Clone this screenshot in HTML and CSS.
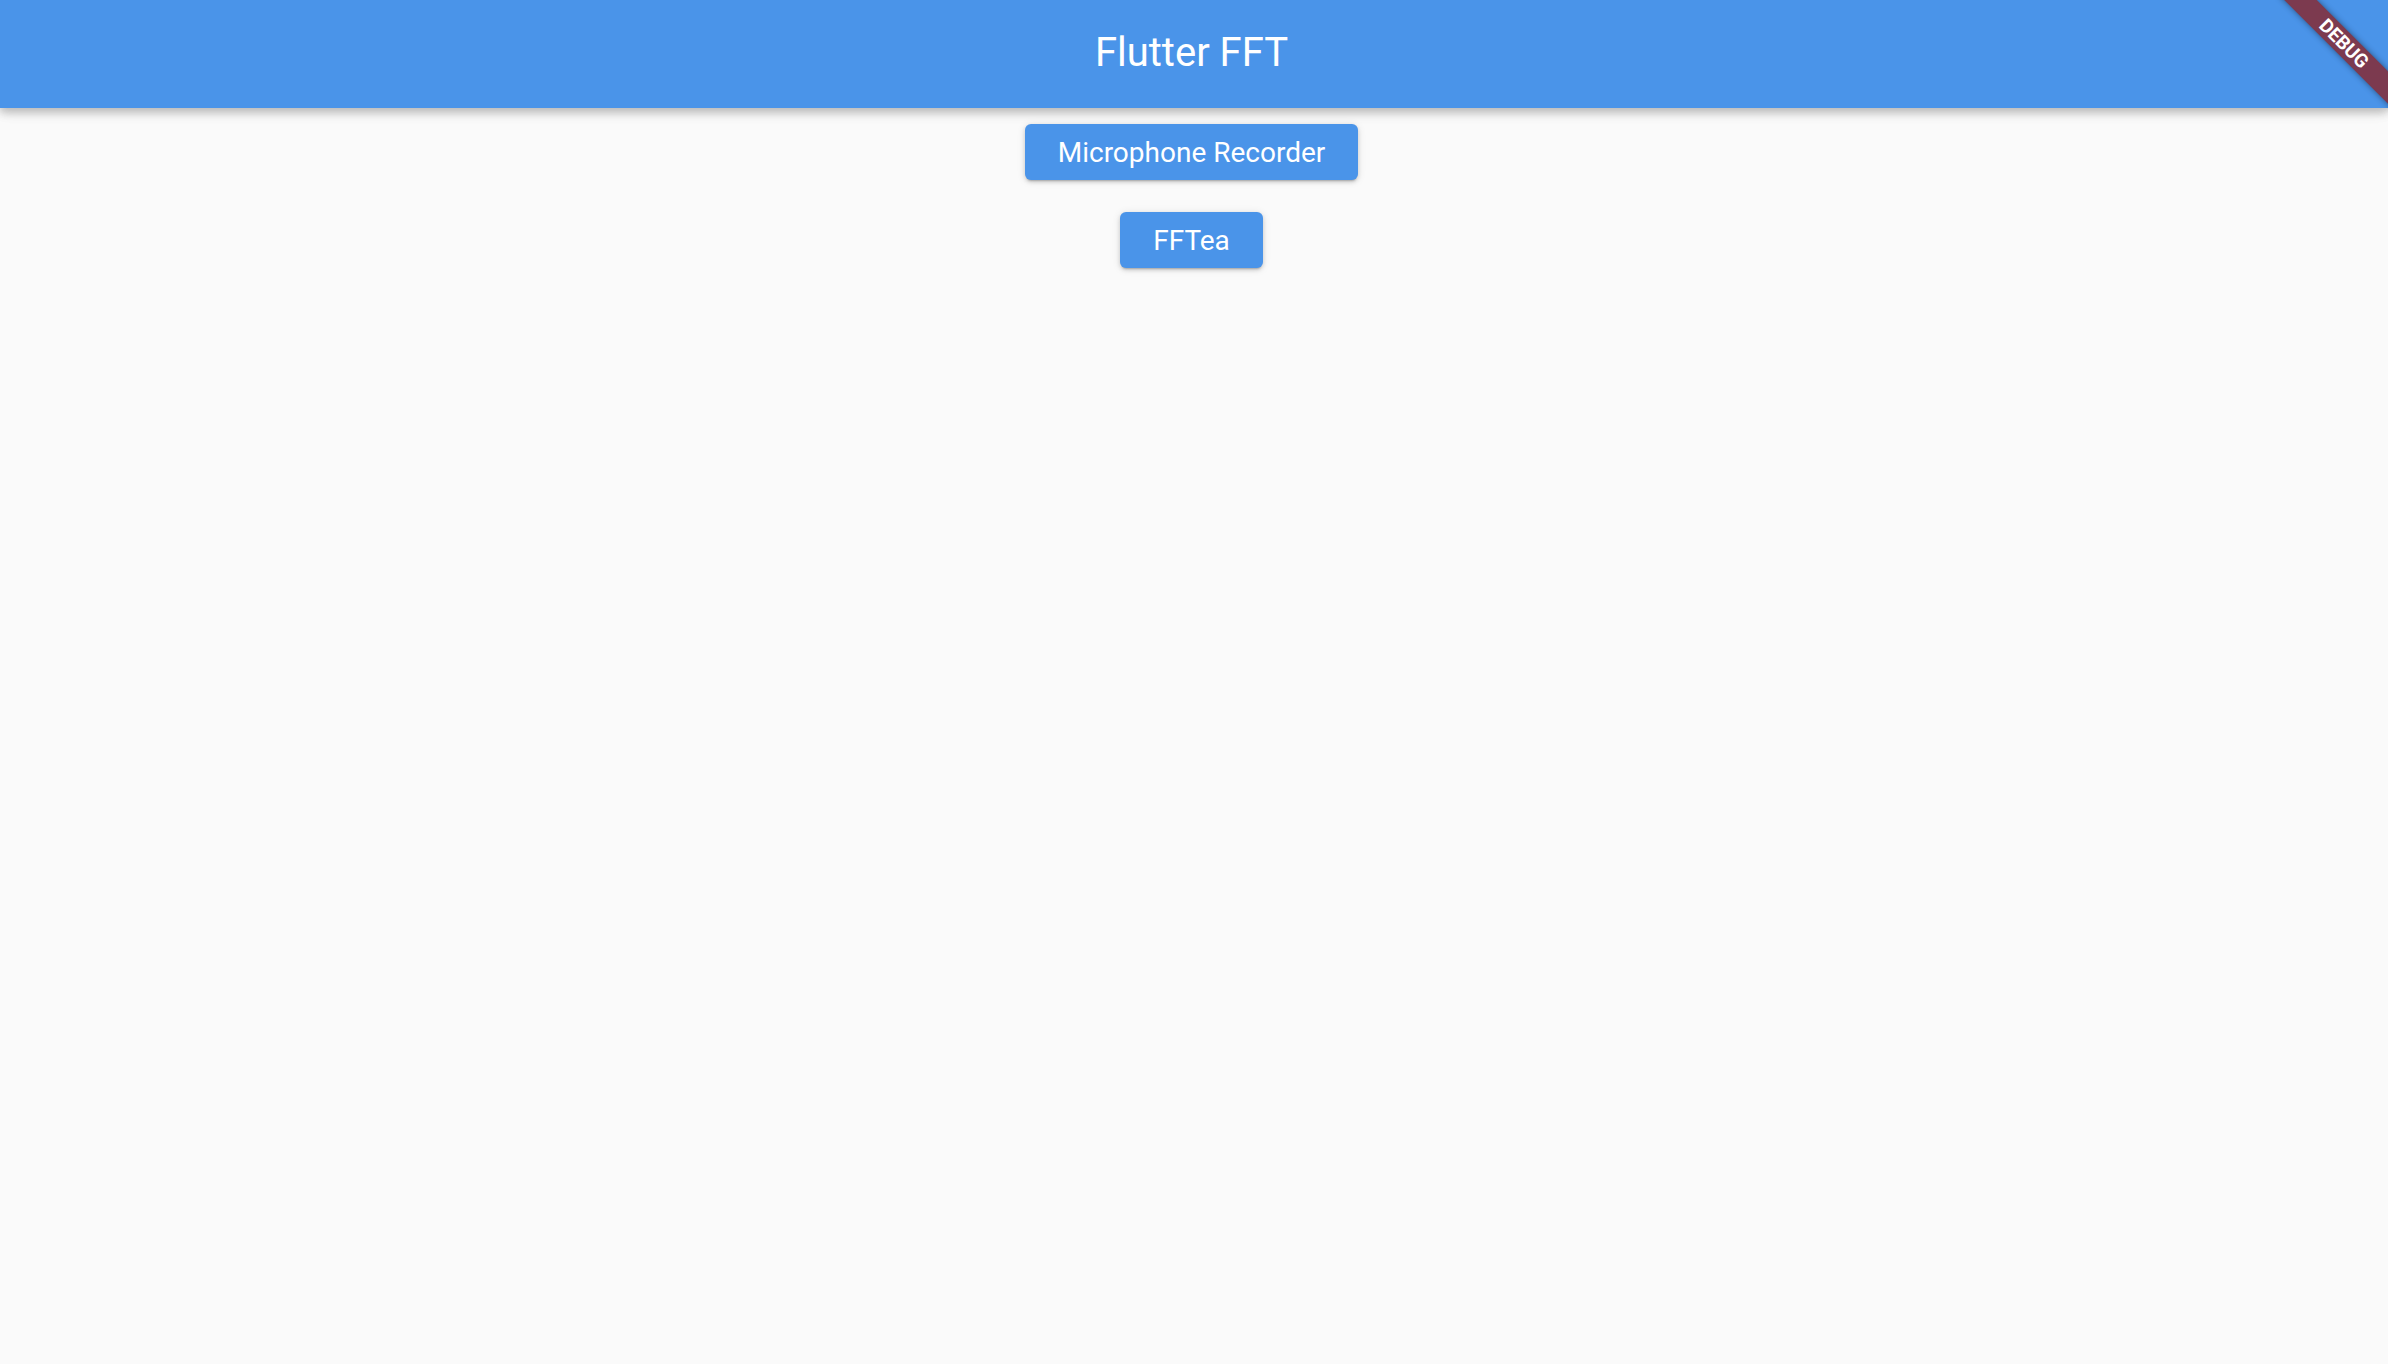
FILE: index.html
```html
<!DOCTYPE html>
<html lang="en">
<head>
<meta charset="utf-8">
<title>Flutter FFT</title>
<link rel="stylesheet" href="styles.css">
</head>
<body>
<header class="app-bar">
  <h1 class="app-title">Flutter FFT</h1>
</header>
<main class="content">
  <button class="btn" type="button">Microphone Recorder</button>
  <button class="btn" type="button">FFTea</button>
</main>
<div class="debug-banner">DEBUG</div>
</body>
</html>
```

FILE: styles.css
```css
html, body {
  margin: 0;
  padding: 0;
  height: 100%;
}
body {
  background: #fafafa;
  font-family: Roboto, "Liberation Sans", sans-serif;
  overflow: hidden;
  position: relative;
}
.app-bar {
  box-sizing: border-box;
  height: 108px;
  padding: 0 5px 3px 0;
  background: #4a94e9;
  display: flex;
  align-items: center;
  justify-content: center;
  box-shadow: 0 4px 8px rgba(0,0,0,0.16), 0 6px 10px rgba(0,0,0,0.08), 0 2px 16px rgba(0,0,0,0.08);
  position: relative;
  z-index: 1;
}
.app-title {
  margin: 0;
  color: #ffffff;
  font-size: 40px;
  font-weight: 400;
}
.content {
  display: flex;
  flex-direction: column;
  align-items: center;
  gap: 32px;
  padding-top: 16px;
  padding-right: 5px;
}
.btn {
  height: 56px;
  padding: 0 33px;
  border: none;
  border-radius: 6px;
  background: #4a94e9;
  color: #ffffff;
  font-family: Roboto, "Liberation Sans", sans-serif;
  font-size: 28px;
  font-weight: 400;
  box-shadow: 0 3px 2px -2px rgba(0,0,0,0.2), 0 2px 4px rgba(0,0,0,0.14), 0 1px 8px rgba(0,0,0,0.1);
  cursor: pointer;
}
.debug-banner {
  position: absolute;
  top: 32px;
  right: -36px;
  width: 160px;
  height: 23px;
  line-height: 23px;
  background: #7c3a4f;
  color: #ffffff;
  font-family: Roboto, "Liberation Sans", sans-serif;
  font-weight: 700;
  font-size: 19px;
  text-align: center;
  transform: rotate(45deg);
  box-shadow: 0 0 6px rgba(0,0,0,0.45);
  z-index: 2;
}
```
